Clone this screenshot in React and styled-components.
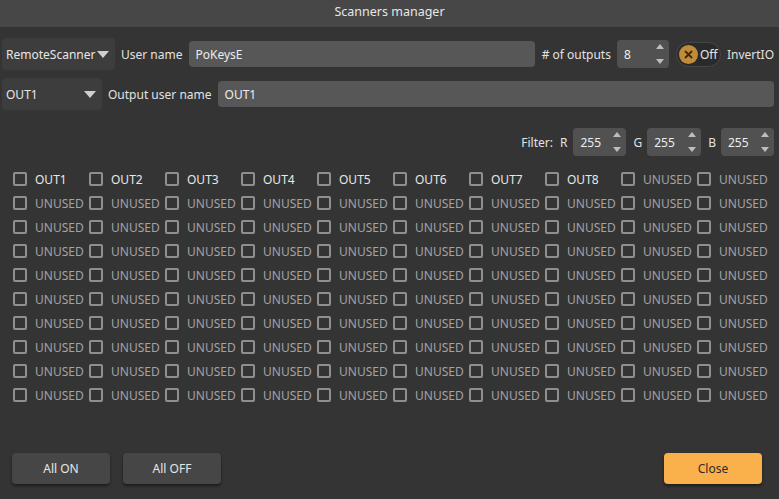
import React from "react";
import styled, { createGlobalStyle } from "styled-components";

const Global = createGlobalStyle`
  html, body { margin: 0; padding: 0; background: #343434; }
  body { font-family: "Noto Sans", "DejaVu Sans", sans-serif; font-size: 12px; color: #e2e2e2; }
  * { box-sizing: border-box; }
`;

const Window = styled.div`
  width: 779px;
  height: 499px;
  display: flex;
  flex-direction: column;
  background: #343434;
  overflow: hidden;
`;

const TitleBar = styled.div`
  height: 27px;
  background: #474747;
  display: flex;
  align-items: center;
  justify-content: center;
  font-size: 12.5px;
  color: #e6e6e6;
  padding-bottom: 4px;
`;

const Body = styled.div`
  flex: 1;
  display: flex;
  flex-direction: column;
  padding: 11px 5px 0 2px;
`;

const Row = styled.div`
  display: flex;
  align-items: center;
  gap: 6px;
  height: 32px;
  margin-bottom: ${(p) => p.$mb || 0}px;
`;

const Select = styled.div`
  width: ${(p) => p.$w}px;
  height: 32px;
  background: #3d3d3d;
  border-radius: 4px;
  display: flex;
  align-items: center;
  justify-content: space-between;
  padding: 0 4px 0 4px;
  color: #e6e6e6;
  font-size: 12px;
`;

const Arrow = styled.span`
  width: 0;
  height: 0;
  border-left: 6px solid transparent;
  border-right: 6px solid transparent;
  border-top: 7px solid #cfcfcf;
  margin-right: 2px;
`;

const Label = styled.span`
  color: #e2e2e2;
  white-space: nowrap;
  margin: ${(p) => p.$m || "0"};
`;

const TextInput = styled.div`
  flex: 1;
  height: 26px;
  background: #575757;
  border-radius: 4px;
  display: flex;
  align-items: center;
  padding: 0 7px;
  color: #ededed;
  margin-right: ${(p) => p.$mr || 0}px;
`;

const Spin = styled.div`
  width: ${(p) => p.$w || 53}px;
  height: 28px;
  background: #515151;
  border-radius: 4px;
  display: flex;
  align-items: center;
  justify-content: space-between;
  padding: 0 5px 0 7px;
  color: #ededed;
  margin: ${(p) => p.$m || "0"};
`;

const SpinArrows = styled.div`
  display: flex;
  flex-direction: column;
  justify-content: space-between;
  height: 20px;
`;

const Tri = styled.span`
  width: 0;
  height: 0;
  border-left: 4px solid transparent;
  border-right: 4px solid transparent;
  ${(p) =>
    p.$up
      ? "border-bottom: 5px solid #bdbdbd;"
      : "border-top: 5px solid #bdbdbd;"}
`;

const Toggle = styled.div`
  height: 25px;
  width: 45px;
  border-radius: 13px;
  background: #2a2a2a;
  border: 1px solid #474747;
  display: flex;
  align-items: center;
  gap: 2px;
  padding: 0 0 0 2px;
  color: #e6e6e6;
  margin-left: 1px;
`;

const Knob = styled.span`
  width: 19px;
  height: 19px;
  border-radius: 50%;
  background: #c08c3c;
  display: flex;
  align-items: center;
  justify-content: center;
  flex: none;
`;

const FilterRow = styled.div`
  display: flex;
  align-items: center;
  justify-content: flex-end;
  height: 30px;
  margin-top: 17px;
`;

const Grid = styled.div`
  display: grid;
  grid-template-columns: repeat(10, 76px);
  grid-auto-rows: 24px;
  padding-left: 11px;
  margin-top: 10px;
`;

const Cell = styled.div`
  display: flex;
  align-items: center;
  gap: 8px;
`;

const Box = styled.span`
  width: 14px;
  height: 14px;
  border: 2px solid #8f8f8f;
  border-radius: 2px;
  flex: none;
`;

const CellText = styled.span`
  color: ${(p) => (p.$used ? "#e8e8e8" : "#a3a3a3")};
  white-space: nowrap;
`;

const Footer = styled.div`
  margin-top: auto;
  display: flex;
  align-items: center;
  padding: 0 17px 15px 12px;
  gap: 13px;
`;

const Button = styled.button`
  width: 98px;
  height: 31px;
  border: none;
  border-radius: 4px;
  font-family: "Noto Sans", "DejaVu Sans", sans-serif;
  font-size: 12px;
  background: ${(p) => (p.$primary ? "#fbb14b" : "#464646")};
  color: ${(p) => (p.$primary ? "#2a2a2a" : "#e6e6e6")};
  box-shadow: 0 2px 3px rgba(0, 0, 0, 0.45);
  margin-left: ${(p) => (p.$push ? "auto" : "0")};
`;

const Spinner = ({ value, w, m }) => (
  <Spin $w={w} $m={m}>
    <span>{value}</span>
    <SpinArrows>
      <Tri $up />
      <Tri />
    </SpinArrows>
  </Spin>
);

const cells = [];
for (let r = 0; r < 10; r++) {
  for (let c = 0; c < 10; c++) {
    const used = r === 0 && c < 8;
    cells.push({ key: `${r}-${c}`, used, text: used ? `OUT${c + 1}` : "UNUSED" });
  }
}

export default function App() {
  return (
    <>
      <Global />
      <Window>
        <TitleBar>Scanners manager</TitleBar>
        <Body>
          <Row $mb={8}>
            <Select $w={113}>
              <span>RemoteScanner</span>
              <Arrow />
            </Select>
            <Label>User name</Label>
            <TextInput $mr={1}>PoKeysE</TextInput>
            <Label># of outputs</Label>
            <Spinner value="8" w={52} />
            <Toggle>
              <Knob>
                <svg width="9" height="9" viewBox="0 0 9 9">
                  <path d="M1.5 1.5 L7.5 7.5 M7.5 1.5 L1.5 7.5" stroke="#3a2a10" strokeWidth="1.8" strokeLinecap="round" />
                </svg>
              </Knob>
              <span>Off</span>
            </Toggle>
            <Label>InvertIO</Label>
          </Row>
          <Row>
            <Select $w={100}>
              <span>OUT1</span>
              <Arrow />
            </Select>
            <Label>Output user name</Label>
            <TextInput>OUT1</TextInput>
          </Row>
          <FilterRow>
            <Label $m="0 7px 0 0">Filter:</Label>
            <Label>R</Label>
            <Spinner value="255" m="0 7px 0 6px" />
            <Label>G</Label>
            <Spinner value="255" w={54} m="0 7px 0 5px" />
            <Label>B</Label>
            <Spinner value="255" m="0 0 0 5px" />
          </FilterRow>
          <Grid>
            {cells.map((c) => (
              <Cell key={c.key}>
                <Box />
                <CellText $used={c.used}>{c.text}</CellText>
              </Cell>
            ))}
          </Grid>
        </Body>
        <Footer>
          <Button>All ON</Button>
          <Button>All OFF</Button>
          <Button $primary $push>Close</Button>
        </Footer>
      </Window>
    </>
  );
}
